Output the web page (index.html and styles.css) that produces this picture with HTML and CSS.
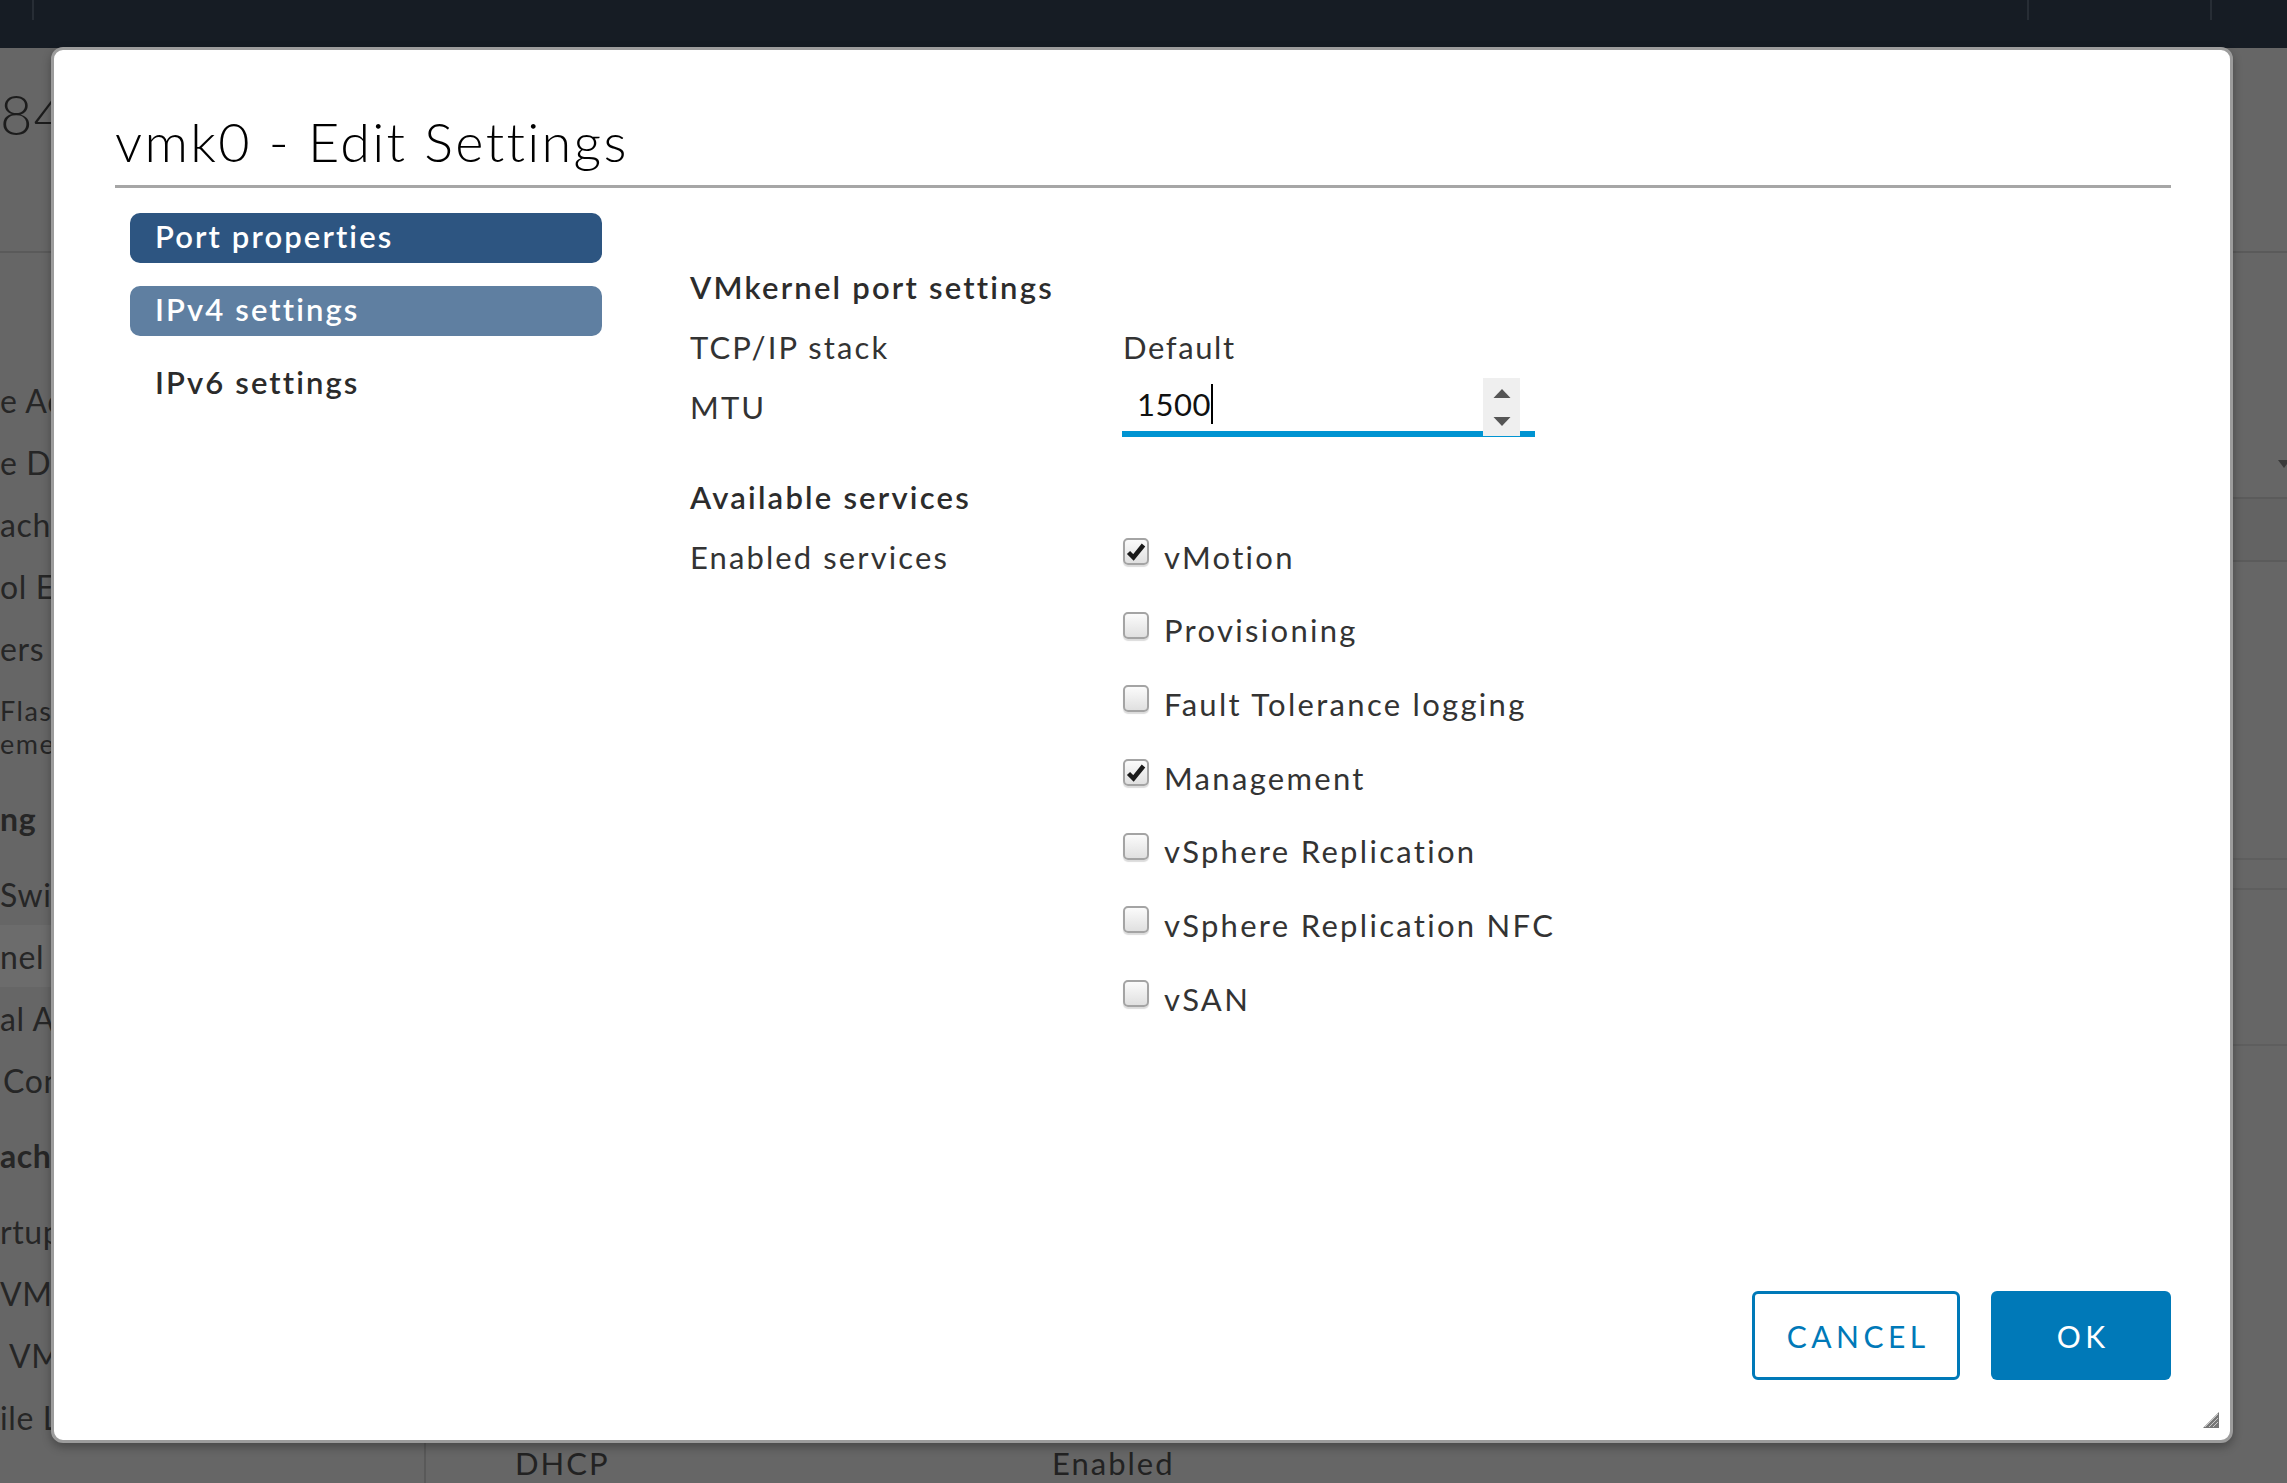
FILE: index.html
```html
<!DOCTYPE html>
<html lang="en">
<head>
<meta charset="utf-8">
<title>vmk0 - Edit Settings</title>
<link rel="stylesheet" href="styles.css">
</head>
<body>
<div class="app">
  <header class="topbar">
    <span class="tsep sep-a"></span>
    <span class="tsep sep-b"></span>
    <span class="tsep sep-c"></span>
  </header>
  <div class="page-title">84</div>
  <div class="page-main">
    <nav class="side">
      <div class="si">e Adapters</div>
      <div class="si">e Devices</div>
      <div class="si">ache Configuration</div>
      <div class="si">ol Endpoints</div>
      <div class="si">ers</div>
      <div class="si two"><div class="line">Flash Resource</div><div class="line">ement</div></div>
      <div class="sh">ng</div>
      <div class="si">Switches</div>
      <div class="si sel">nel Adapters</div>
      <div class="si">al Adapters</div>
      <div class="si"><span class="ind-s">Configuration</span></div>
      <div class="sh">achines</div>
      <div class="si">rtup/Shutdown</div>
      <div class="si">VM Settings</div>
      <div class="si"><span class="ind-m">VM Compatibility</span></div>
      <div class="si">ile Location</div>
    </nav>
    <section class="content">
      <div class="c-bar1">
        <svg class="c-caret" width="12" height="9" viewBox="0 0 12 9"><path d="M0 0 L12 0 L6 8 Z" fill="#3a3a3a"/></svg>
      </div>
      <div class="c-bar2"></div>
      <div class="c-gap"></div>
      <div class="c-head"></div>
      <div class="c-rows"></div>
      <div class="c-last">
        <span class="c-cell">DHCP</span>
        <span class="c-cell">Enabled</span>
      </div>
    </section>
  </div>
</div>

<div class="modal" role="dialog" aria-label="vmk0 - Edit Settings">
  <h1 class="modal-title">vmk0 - Edit Settings</h1>
  <div class="modal-body">
    <nav class="steps">
      <div class="step active">Port properties</div>
      <div class="step done">IPv4 settings</div>
      <div class="step">IPv6 settings</div>
    </nav>
    <div class="form">
      <h2 class="section">VMkernel port settings</h2>
      <div class="row"><span class="lbl">TCP/IP stack</span><span class="val">Default</span></div>
      <div class="row"><span class="lbl">MTU</span>
        <div class="num">
          <span class="num-text">1500</span><span class="caret"></span>
          <span class="spin"><svg width="37" height="58" viewBox="0 0 37 58"><path d="M10.5 20 L19 11 L27.5 20 Z" fill="#555"/><path d="M10.5 39 L19 48 L27.5 39 Z" fill="#555"/></svg></span>
        </div>
      </div>
      <h2 class="section second">Available services</h2>
      <div class="row"><span class="lbl">Enabled services</span>
        <ul class="checks">
          <li class="check"><span class="box on"><svg width="20" height="20" viewBox="0 0 20 20"><path d="M2.5 10.5 L7.5 15.5 L17.5 3" fill="none" stroke="#1a1a1a" stroke-width="4.5"/></svg></span><span class="ctext">vMotion</span></li>
          <li class="check"><span class="box"></span><span class="ctext">Provisioning</span></li>
          <li class="check"><span class="box"></span><span class="ctext">Fault Tolerance logging</span></li>
          <li class="check"><span class="box on"><svg width="20" height="20" viewBox="0 0 20 20"><path d="M2.5 10.5 L7.5 15.5 L17.5 3" fill="none" stroke="#1a1a1a" stroke-width="4.5"/></svg></span><span class="ctext">Management</span></li>
          <li class="check"><span class="box"></span><span class="ctext">vSphere Replication</span></li>
          <li class="check"><span class="box"></span><span class="ctext">vSphere Replication NFC</span></li>
          <li class="check"><span class="box"></span><span class="ctext">vSAN</span></li>
        </ul>
      </div>
    </div>
  </div>
  <footer class="modal-foot">
    <button class="btn outline" type="button">CANCEL</button>
    <button class="btn primary" type="button">OK</button>
  </footer>
  <svg class="grip" width="20" height="18" viewBox="0 0 20 18">
    <path d="M18 2 L18 18 L2 18 Z" fill="#777"/>
    <path d="M4 17 L17 4 M8 17 L17 8 M12 17 L17 12" stroke="#fff" stroke-width="1" opacity="0.6"/>
  </svg>
</div>
</body>
</html>
```

FILE: styles.css
```css
* { box-sizing: border-box; }
html, body { margin: 0; padding: 0; }
body {
  width: 2287px;
  height: 1483px;
  overflow: hidden;
  background: #666666;
  font-family: Lato, "Noto Sans", sans-serif;
  position: relative;
}

/* ---------- background page (dimmed) ---------- */
.app { height: 1483px; display: flex; flex-direction: column; }
.topbar { height: 48px; flex: none; background: #161c24; display: flex; }
.tsep { width: 2px; height: 20px; background: #272d35; }
.sep-a { margin-left: 32px; }
.sep-b { margin-left: auto; }
.sep-c { margin-left: 181px; margin-right: 75px; }

.page-title {
  height: 205px;
  flex: none;
  border-bottom: 2px solid #5a5a5a;
  padding-top: 35px;
  font: 300 56px/62px Lato, sans-serif;
  letter-spacing: 1px;
  color: #1c1c1c;
  white-space: nowrap;
}

.page-main { flex: 1; display: flex; min-height: 0; }
.side {
  width: 426px;
  flex: none;
  border-right: 2px solid #595959;
  padding-top: 116px;
  font-size: 32px;
  letter-spacing: 0.6px;
  color: #262626;
  white-space: nowrap;
  overflow: hidden;
}
.si { line-height: 33px; padding: 14.5px 0; }
.si.two .line { font-size: 27px; line-height: 33px; letter-spacing: 1.5px; }
.si.sel { background: #6c6c6c; }
.sh { line-height: 33px; padding: 28px 0; font-weight: 700; }
.ind-s { padding-left: 3px; }
.ind-m { padding-left: 9px; }

.content { flex: 1; display: flex; flex-direction: column; }
.c-bar1 {
  height: 246px;
  border-bottom: 2px solid #5b5b5b;
  display: flex;
  justify-content: flex-end;
  align-items: flex-end;
  padding-bottom: 28px;
}
.c-caret { margin-right: -3px; }
.c-bar2 { height: 63px; border-bottom: 2px solid #5b5b5b; background: #636363; }
.c-gap { height: 298px; border-bottom: 2px solid #5e5e5e; }
.c-head { height: 30px; border-bottom: 2px solid #5e5e5e; }
.c-rows { height: 156px; border-bottom: 2px solid #5e5e5e; }
.c-last {
  margin-top: auto;
  height: 40px;
  display: flex;
  padding-left: 89px;
  font-size: 31px;
  letter-spacing: 2px;
  line-height: 40px;
  color: #222;
}
.c-cell:first-child { width: 537px; }

/* ---------- modal ---------- */
.modal {
  position: absolute;
  left: 51px;
  top: 47px;
  width: 2182px;
  height: 1396px;
  background: #ffffff;
  border: 3px solid #9c9c9c;
  border-radius: 12px;
  box-shadow: 0 4px 10px rgba(0, 0, 0, 0.3);
  padding: 60px 59px 60px 61px;
  display: flex;
  flex-direction: column;
  color: #333333;
}
.modal-title {
  margin: 0;
  font: 300 54px/64px Lato, sans-serif;
  letter-spacing: 2.3px;
  color: #000000;
  padding-bottom: 11px;
  border-bottom: 3px solid #a6a6a6;
}
.modal-body { flex: 1; display: flex; padding-top: 25px; }

.steps {
  width: 472px;
  flex: none;
  margin-left: 15px;
  display: flex;
  flex-direction: column;
  gap: 23px;
}
.step {
  height: 50px;
  border-radius: 10px;
  padding: 0 0 3px 25px;
  font: 600 31px/47px Lato, sans-serif;
  letter-spacing: 2.1px;
  color: #2b2b2b;
}
.step.active { background: #2d5581; color: #ffffff; }
.step.done { background: #5f7fa1; color: #ffffff; }

.form {
  margin-left: 88px;
  padding-top: 43.5px;
  font-size: 31px;
  letter-spacing: 2.1px;
  color: #333333;
}
.section { margin: 0; font: 600 31px/60px Lato, sans-serif; letter-spacing: 2.2px; color: #2c2c2c; }
.section.second { margin-top: 30px; }
.row { display: flex; line-height: 60px; }
.lbl { width: 433px; flex: none; }
.val { color: #333333; letter-spacing: 1.6px; }

.num {
  width: 413px;
  height: 60px;
  margin-left: -1px;
  border-bottom: 6px solid #0094d2;
  display: flex;
  align-items: center;
  padding: 0 15px;
  color: #111111;
  letter-spacing: 0.5px;
}
.num-text { line-height: 40px; }
.caret { width: 2px; height: 40px; background: #000; margin-left: 0; }
.spin {
  align-self: flex-start;
  margin-left: auto;
  margin-top: 1.5px;
  width: 37px;
  height: 58px;
  background: #efefef;
  display: block;
}
.spin svg { display: block; }

.checks {
  list-style: none;
  margin: 0;
  padding: 0;
  display: flex;
  flex-direction: column;
  gap: 13.7px;
}
.check { height: 60px; display: flex; align-items: flex-start; gap: 15px; }
.box {
  flex: none;
  width: 26px;
  height: 27px;
  margin-top: 11.5px;
  border: 2px solid #a4a4a4;
  border-radius: 5px;
  background: linear-gradient(#fbfbfb, #e0e0e0);
  box-shadow: 0 2px 1px rgba(0, 0, 0, 0.14);
  display: flex;
  align-items: center;
  justify-content: center;
}
.ctext { line-height: 60px; color: #333333; letter-spacing: 2.3px; }

.modal-foot { display: flex; justify-content: flex-end; gap: 31px; }
.btn {
  height: 89px;
  border-radius: 6px;
  font: 400 30px Lato, sans-serif;
  letter-spacing: 4.5px;
  padding: 0 0 0 4.5px;
  display: flex;
  align-items: center;
  justify-content: center;
  cursor: pointer;
}
.btn.outline { width: 208px; border: 3px solid #0079b8; color: #0079b8; background: #ffffff; }
.btn.primary { width: 180px; border: none; background: #0079b8; color: #ffffff; }

.grip { position: absolute; right: 9px; bottom: 12px; }
```
